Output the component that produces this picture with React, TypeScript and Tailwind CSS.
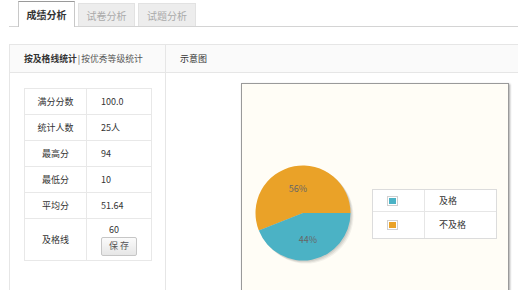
import React from "react";

const font = { fontFamily: '"Noto Sans CJK SC", "Noto Sans", sans-serif' };

function Pie() {
  const cx = 60, cy = 60, r = 47.5;
  const a = (158.4 * Math.PI) / 180;
  const ex = cx + r * Math.cos(a);
  const ey = cy + r * Math.sin(a);
  const blue = `M${cx},${cy} L${cx + r},${cy} A${r},${r} 0 0 1 ${ex},${ey} Z`;
  const orange = `M${cx},${cy} L${ex},${ey} A${r},${r} 0 1 1 ${cx + r},${cy} Z`;
  return (
    <svg width="120" height="120" viewBox="0 0 120 120" className="absolute left-[1px] top-[69px]">
      <circle cx={cx + 3} cy={cy + 3} r={r} fill="rgba(0,0,0,0.05)" />
      <circle cx={cx + 2} cy={cy + 2} r={r} fill="rgba(0,0,0,0.07)" />
      <circle cx={cx + 1} cy={cy + 1} r={r} fill="rgba(0,0,0,0.08)" />
      <path d={orange} fill="#eaa228" />
      <path d={blue} fill="#4bb2c5" />
      <text x={cx - 5} y={cy - 21.5} fontSize="9" fill="#666" textAnchor="middle" style={font}>56%</text>
      <text x={cx + 5} y={cy + 30} fontSize="9" fill="#666" textAnchor="middle" style={font}>44%</text>
    </svg>
  );
}

export default function App() {
  const rows: [string, string][] = [
    ["满分分数", "100.0"],
    ["统计人数", "25人"],
    ["最高分", "94"],
    ["最低分", "10"],
    ["平均分", "51.64"],
  ];
  return (
    <div className="w-[518px] h-[290px] bg-white overflow-hidden text-[#333]" style={font}>
      {/* tabs */}
      <div className="ml-[9px] h-[27px] border-b border-[#d4d4d4] pl-[9px] flex items-end gap-[3px]">
        <div className="w-[57px] h-[26px] bg-white border border-[#c8c8c8] border-t-[#9a9a9a] border-b-0 -mb-px pb-px flex items-center justify-center text-[10px] font-bold text-[#333]">
          成绩分析
        </div>
        <div className="w-[57px] h-[23px] bg-[#ededed] border border-[#e2e2e2] border-b-0 flex items-center justify-center text-[10px] text-[#aaa]">
          试卷分析
        </div>
        <div className="w-[58px] h-[23px] bg-[#ededed] border border-[#e2e2e2] border-b-0 flex items-center justify-center text-[10px] text-[#aaa]">
          试题分析
        </div>
      </div>

      {/* panel */}
      <div className="ml-[9px] mt-[17px] border-l border-t border-[#e6e6e6] flex h-[260px] overflow-hidden">
        {/* left */}
        <div className="w-[156px] shrink-0 border-r border-[#e6e6e6] flex flex-col">
          <div className="h-[28px] shrink-0 bg-[#fafafa] border-b border-[#e6e6e6] flex items-center pl-[14px] text-[8.8px] text-[#333] whitespace-nowrap">
            <span className="font-bold">按及格线统计</span>
            <span className="mx-[1px] text-[#555]">|</span>
            <span className="text-[#555]">按优秀等级统计</span>
          </div>
          <div className="pl-[14px] pt-[15px]">
            <table className="border-collapse text-[9px] text-[#333]">
              <tbody>
                {rows.map(([k, v]) => (
                  <tr key={k} className="h-[26px]">
                    <td className="w-[62px] border border-[#e8e8e8] text-center">{k}</td>
                    <td className="w-[65px] border border-[#e8e8e8] pl-[14px]">{v}</td>
                  </tr>
                ))}
                <tr className="h-[42px]">
                  <td className="border border-[#e8e8e8] text-center">及格线</td>
                  <td className="border border-[#e8e8e8] pl-[14px]">
                    <div className="flex flex-col items-start">
                      <span className="ml-[8px] leading-[12px]">60</span>
                      <button className="mt-[1px] w-[36px] h-[19px] border border-[#c6c6c6] rounded-[2px] bg-gradient-to-b from-[#fbfbfb] to-[#e6e6e6] text-[9px] text-[#555] tracking-[2px] pl-[2px]">
                        保存
                      </button>
                    </div>
                  </td>
                </tr>
              </tbody>
            </table>
          </div>
        </div>
        {/* right */}
        <div className="flex-1 flex flex-col">
          <div className="h-[28px] shrink-0 bg-[#fafafa] border-b border-[#e6e6e6] flex items-center pl-[14px] text-[9px] text-[#333]">
            示意图
          </div>
          <div className="pl-[75px] pt-[10px] shrink-0">
            <div className="relative w-[268px] h-[230px] bg-[#fffdf6] border border-[#9a9a9a] shadow-[1px_1px_2px_rgba(0,0,0,0.35)]">
              <Pie />
              <div className="absolute left-[130px] top-[105px] w-[125px] border border-[#dcdcdc] bg-white text-[9px] text-[#333]">
                <div className="flex h-[22px] border-b border-[#e6e6e6]">
                  <div className="w-[52px] border-r border-[#e6e6e6] flex items-center pl-[14px]">
                    <div className="w-[11px] h-[10px] border border-[#d0d0d0] p-px">
                      <div className="w-full h-full bg-[#4bb2c5]" />
                    </div>
                  </div>
                  <div className="flex items-center pl-[14px]">及格</div>
                </div>
                <div className="flex h-[26px]">
                  <div className="w-[52px] border-r border-[#e6e6e6] flex items-center pl-[14px]">
                    <div className="w-[11px] h-[10px] border border-[#d0d0d0] p-px">
                      <div className="w-full h-full bg-[#eaa228]" />
                    </div>
                  </div>
                  <div className="flex items-center pl-[14px]">不及格</div>
                </div>
              </div>
            </div>
          </div>
        </div>
      </div>
    </div>
  );
}
